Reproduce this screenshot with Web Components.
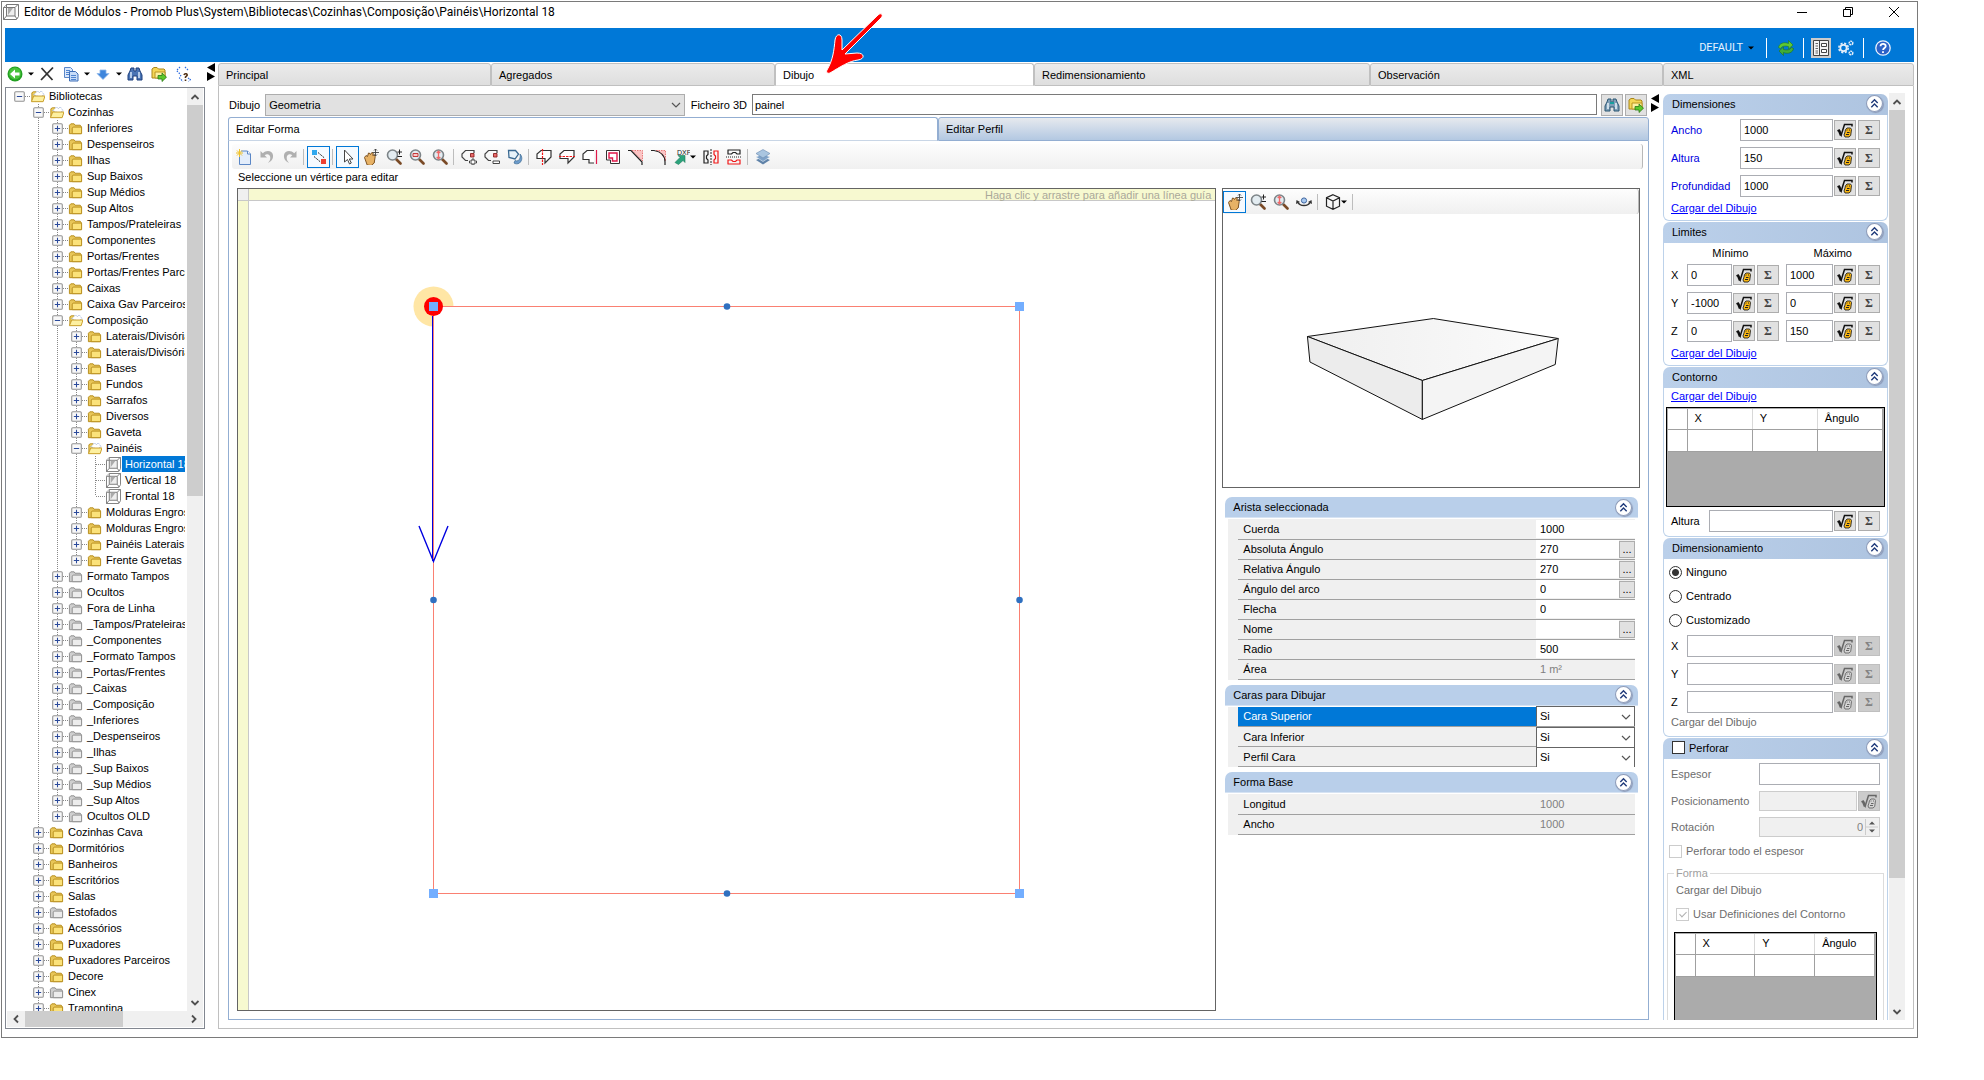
<!DOCTYPE html>
<html lang="es">
<head>
<meta charset="utf-8">
<title>Editor de Módulos</title>
<style>
html,body{margin:0;height:100%;background:#fff}
body{font:11px/16px "Liberation Sans",Arial,sans-serif;color:#000}
</style>
</head>
<body>
<module-editor></module-editor>
<script>
const BASE = `*,:host{box-sizing:border-box}
button,input,select{font:inherit;color:inherit;margin:0;border-radius:0;padding:0}
button{display:flex;align-items:center;justify-content:center;background:none;border:0;flex:none}
[hidden]{display:none}`;

function define(name, css, html, setup) {
  customElements.define(name, class extends HTMLElement {
    connectedCallback() {
      if (this.shadowRoot) return;
      const root = this.attachShadow({ mode: 'open' });
      root.innerHTML = `<style>${BASE}${css}</style>` + (typeof html === 'function' ? html(this) : html);
      if (setup) setup(root, this);
    }
  });
}

/* ---------- icons, all on a 16 x 16 grid ---------- */
const lens = (inner) => `<path d="M10.500 10.500l4 4" stroke="#7a4a26" stroke-width="2.600" stroke-linecap="round"/><circle cx="6.500" cy="6" r="5" fill="#e3ecf1" stroke="#7d8488" stroke-width="1.600"/>${inner}`;
const folder = (a, b, c) => `<path d="M1.500 13.500v-9l1.500-1.500h3.500l1 1.500h5.500l1 1v8z" fill="${a}" stroke="${c}"/><path d="M4.500 13.500v-6l1-1h9v7z" fill="${b}" stroke="${c}"/>`;
const shape = 'M1 9.500V5l4-3.500h10V8l-6 6V9.500z';
const ICONS = {
  back: `<circle cx="8" cy="8" r="7.500" fill="#23a023"/><circle cx="8" cy="7.500" r="6" fill="#47c23a"/><path d="M3 8l5-4.500V6.500h4.500v3H8v3z" fill="#fff"/>`,
  close: `<path d="M2.500 2l11 12M14 1.500L2 14" stroke="#333" stroke-width="1.800"/>`,
  copy: `<path d="M1.500 1.500h6l2 2v8h-8z" fill="#dbe8fb" stroke="#5a86c8"/><path d="M3 4.500h4M3 6.500h4M3 8.500h3" stroke="#4f84d0"/><path d="M6.500 5.500h6l2.500 2.500v7H6.500z" fill="#c6dbf8" stroke="#3f6fb8"/><path d="M8 9.500h5M8 11.500h5M8 13.500h5" stroke="#4f84d0"/>`,
  down: `<path d="M5 4h6v3.500h3L8 13.500 2 7.500h3z" fill="#3f86dc" stroke="#8db6ea" stroke-width=".8"/>`,
  binoculars: `<path d="M4 2h3v3h2V2h3l1 3 2 4v5h-5v-4H6v4H1V9l2-4z" fill="#7f9fb8" stroke="#2b5673"/><path d="M4 6v6M12 6v6" stroke="#e3eef5" stroke-width="1.600"/><path d="M6 6h4" stroke="#18a0a0" stroke-width="2"/>`,
  binoblue: `<path d="M4 2h3v3h2V2h3l1 3 2 4v5h-5v-4H6v4H1V9l2-4z" fill="#4a74b4" stroke="#1d3f7d"/><path d="M4 6v6M12 6v6" stroke="#cfe0f6" stroke-width="1.600"/>`,
  foldergo: `<path d="M1 12V3l2-1.500h3l1.500 1.500h5.500l1 1v8z" fill="#f5d654" stroke="#a8851a"/><path d="M4 12V6h10v6z" fill="#fdf0a0" stroke="#b99420"/><path d="M7 9.500h4V7l4.500 4.200-4.500 4.300V13H7z" fill="#5dc82c" stroke="#2a7a14" stroke-width=".8"/>`,
  dotq: `<path d="M5 1L1.500 4.500 5 8M10 1l3.500 3.500M6 9l-1.500 3L8 15.500M13 12l2.500 1.500-2 2" fill="none" stroke="#2c6be0" stroke-width="1.200" stroke-dasharray="1.500 1.200"/><path d="M9 9c.5-2 4-1.500 3 .6L10.500 11v1M10.500 13.500v1.500" stroke="#503014" stroke-width="1.600" fill="none"/>`,
  folder: folder('#e8c658', '#fbe27a', '#b58c1c'),
  foldergrey: folder('#cfcfcf', '#ececec', '#8c8c8c'),
  folderopen: `<path d="M2 13V4l1.500-1h3l1 1.500h5l1 1.500v7z" fill="#f0d060" stroke="#b58c1c"/><path d="M4 6l4-4 2 2 2-2 3 4-4 3z" fill="#fff" stroke="#8fa6d8" stroke-dasharray="1 1"/><path d="M1.500 13.500L4 7.500h12l-2 6z" fill="#fdf0a0" stroke="#c79c28"/>`,
  module: `<path d="M.5 3.500l3-3h12v12l-2 3H.5z" fill="#fff" stroke="#777"/><path d="M3.500 3.500h8.500v8.500H3.500zM.5 3.500h3v-3M12 3.500l3-3M12 12l2 3M3.500 12L.5 15.500" fill="#eee" stroke="#777"/><path d="M5 11V4h5z" fill="#aaa"/>`,
  new: `<path d="M5 2h6.500L14.500 5v10.500H3.500V7" fill="#e3edfb" stroke="#5b87c6"/><path d="M11.500 2v3h3" fill="#fff" stroke="#5b87c6"/><path d="M3.500 0v8M0 4h7M1 1.500l5 5M6 1.500l-5 5" stroke="#f0c22a"/>`,
  undo: `<path d="M1.500 2v6.500h6.500L5.700 6.200C8 4 11.500 5.500 11.300 9c-.1 2-1 3.500-2.300 5 3.500-1.500 5.500-4.500 5-8C13.300 1.800 7.500.6 3.800 4.300z" fill="#b0b0b0"/>`,
  redo: `<path d="M14.500 2v6.500H8l2.300-2.300C8 4 4.500 5.500 4.700 9c.1 2 1 3.500 2.300 5-3.500-1.500-5.500-4.500-5-8C2.700 1.800 8.500.6 12.200 4.300z" fill="#b0b0b0"/>`,
  edge: `<path d="M1 1h5v5H1z" fill="#2fa8ee"/><path d="M10 10h5v5h-5z" fill="#ef4030"/><path d="M7 3.500l6.500 5.500M3 7.500l6.500 5.500" stroke="#222" stroke-dasharray="2 1"/>`,
  cursor: `<path d="M4.500 1v12l3-2.500 2 4.500 1.800-1-2-4h3.700z" fill="#fff" stroke="#444"/>`,
  hand: `<path d="M1.500 8.500L3 6.500l1.500 1L5.500 4l1.500.5.500 1 1.500-2.200 1.200.9-.4 2.300 1.800-.7.600 1.700-1 6.500-3 2.500-4-.5z" fill="#e7b266" stroke="#7e5220"/><path d="M12.500 0v7M9.500 3.500h6.500M11 1.500l1.500-1.500L14 1.500M11 5.500L12.500 7 14 5.500" stroke="#444" fill="none" stroke-width=".9"/>`,
  zoompm: lens('<path d="M11.500 3h4.500M13.500.5v5M11.500 7.500h4.500" stroke="#222"/>'),
  zoomrect: lens('<path d="M4 4.500h5v3H4z" fill="#f6c8c8" stroke="#c02828" stroke-width=".9"/>'),
  zoomall: lens('<path d="M6.500 2.500v7M4.700 4l1.800-1.800L8.300 4M4.700 8l1.800 1.800L8.300 8" stroke="#f06a6a" stroke-width="1.300" fill="none"/>'),
  addv: `<path d="M7 11.500H4.500L1 8V5l3.500-3.500H13V4" fill="none" stroke="#444" stroke-width="1.200"/><path d="M9.500 4.500h3.500v3.500H9.500z" fill="#e86a6a" stroke="#8c2020" stroke-width=".9"/><path d="M11 10h2v2h2.500v2H13v2h-2v-2H8.500v-2H11z" fill="#fff" stroke="#333" stroke-width=".9"/>`,
  remv: `<path d="M7 11.500H4.500L1 8V5l3.500-3.500H13V4" fill="none" stroke="#444" stroke-width="1.200"/><path d="M9.500 4.500h3.500v3.500H9.500z" fill="#e86a6a" stroke="#8c2020" stroke-width=".9"/><path d="M9 12h6.500v2.500H9z" fill="#fff" stroke="#333" stroke-width=".9"/>`,
  rotate: `<path d="M1.500 1.500h7l3 3.500-3.500 5-6-1.500z" fill="#e8f3fa" stroke="#3b6a92" stroke-width="1.300"/><path d="M13 5c2.500 2.500 2.500 6.500-.5 9-2 1.300-4 1-5.500 0l1-2.500c2 1 4.500 0 5-2.500.3-1.200.3-2.500 0-4z" fill="#6d9ccc" stroke="#3b6a92" stroke-width=".7"/>`,
  cutv: `<path d="${shape}" fill="#fff" stroke="#333" stroke-width="1.200"/><path d="M6.500 0v16" stroke="#f01818" stroke-width="1.200" stroke-dasharray="2.500 1"/>`,
  cuth: `<path d="${shape}" fill="#fff" stroke="#333" stroke-width="1.200"/><path d="M0 7.500h16" stroke="#f01818" stroke-width="1.200" stroke-dasharray="2.500 1"/>`,
  side: `<path d="M12 14H7V10.500H1V5L5 1.500h7" fill="#fff" stroke="#333" stroke-width="1.200"/><path d="M14.500 1v14" stroke="#e0184a" stroke-width="1.200"/>`,
  offset: `<path d="M1.500 1.500h13v13h-9V11h-4z" fill="#fff" stroke="#333"/><path d="M4 4h8v8H7.500V9H4z" fill="#fff" stroke="#e0184a" stroke-width="1.400"/>`,
  chamfer: `<path d="M4 1.500h10.500V12z" fill="#fbc4c4" stroke="#e46060" stroke-width=".8" stroke-dasharray="1.500 1"/><path d="M0 1.500h3L14 13v3" fill="none" stroke="#222" stroke-width="1.200"/>`,
  fillet: `<path d="M5 1.500h9.500V12C13 7 10 3 5 1.500z" fill="#fbc4c4" stroke="#e46060" stroke-width=".8" stroke-dasharray="1.500 1"/><path d="M0 1.500h3C10 2.500 14 7 14 13v3" fill="none" stroke="#222" stroke-width="1.200"/>`,
  dxf: `<text x="3" y="6" font-family="Liberation Sans" font-size="7" fill="#222">DXF</text><path d="M1 13.500l5-5L4 6.500h7v7l-2-2-4.500 4z" fill="#2ba37c" stroke="#197a58" stroke-width=".6"/>`,
  mirrorh: `<path d="M1 1.500v13M1 2h4v3.500L3.500 7v2.500L5 11v3H1" fill="none" stroke="#222" stroke-width="1.200"/><path d="M15 1.500v13M15 2h-4v3.500L12.500 7v2.500L11 11v3h4" fill="none" stroke="#f01818" stroke-width="1.200"/><path d="M8 0v16" stroke="#222" stroke-dasharray="2 1"/>`,
  mirrorv: `<path d="M1.500 1h13M2 1v4h3.500L7 3.500h2.500L11 5h3V1" fill="none" stroke="#222" stroke-width="1.200"/><path d="M1.500 15h13M2 15v-4h3.500L7 12.500h2.500L11 11h3v4" fill="none" stroke="#f01818" stroke-width="1.200"/><path d="M0 8h16" stroke="#222" stroke-dasharray="1 1"/>`,
  layers: `<path d="M1 11l7-3 7 3-7 4.500z" fill="#5f82a8"/><path d="M1 8l7-3 7 3-7 4.500z" fill="#7fa2c8" stroke="#e6eef6" stroke-width=".6"/><path d="M1 4.500L8 .5l7 4-7 4.500z" fill="#a9c5e0" stroke="#6a8cb0" stroke-width=".6"/>`,
  orbit: `<path d="M2 8.500c2 4 10 4 12 0" fill="none" stroke="#333" stroke-width="1.600"/><path d="M0 10l.5-4L4 8zM16 10l-.5-4L12 8z" fill="#333"/><circle cx="8" cy="6.500" r="2.600" fill="#a7c8ef" stroke="#3f66a0"/>`,
  cube: `<path d="M8 .7l6.500 3v8.500L8 15.300l-6.500-3.100V3.700zM1.500 3.700L8 7l6.500-3.300M8 7v8.300" fill="none" stroke="#222" stroke-width="1.200"/>`,
  sqrt: `<path d="M.5 9l1.700-1 2 5L7.500 2.500H15V4.500" fill="none" stroke="#111" stroke-width="1.500"/><path d="M2 8.500l2 5" stroke="#111" stroke-width="2.400"/><path d="M8.500 7.500L10 6h3.500l1 1.500-.8 6L12 15H8l-1-2 1-3z" fill="#f7b512" stroke="#222" stroke-width=".9"/><path d="M9.500 8h1M12 8h1M9 12.500h3M10 10.500h2.500" stroke="#222"/>`,
  sqrtoff: `<path d="M.5 9l1.700-1 2 5L7.500 2.500H15V4.500" fill="none" stroke="#666" stroke-width="1.500"/><path d="M2 8.500l2 5" stroke="#666" stroke-width="2.400"/><path d="M8.500 7.500L10 6h3.500l1 1.500-.8 6L12 15H8l-1-2 1-3z" fill="#d4d4d4" stroke="#666" stroke-width=".9"/><path d="M9.500 8h1M12 8h1M9 12.500h3M10 10.500h2.500" stroke="#666"/>`,
  refresh: `<path d="M.5 7.500C1 3.500 6 1.500 10.500 3.500V.5L15 5l-4.500 4V6.500C7 5.500 4 6 2.500 8.500z" fill="#5ec832" stroke="#207a20" stroke-width=".6"/><path d="M15.500 8.500c-.5 4-5.500 6-10 4v3L1 11l4.500-4v2.500c3.500 1 6.500.5 8-2z" fill="#41ad38" stroke="#1c6e20" stroke-width=".6"/>`,
  form: `<path d="M.5.5h15v15H.5z" fill="#f5f5f5" stroke="#444"/><path d="M6.500 1v14" stroke="#444"/><path d="M2.500 3.500h2.500M2.500 6h2.500M2.500 8.500h2.500M2.500 11h2.500M2.500 13h2.500" stroke="#555" stroke-width=".9"/><path d="M8.500 3.500h5v3h-5zM8.500 9.500h5v3h-5z" fill="#fff" stroke="#444"/>`,
  gears: `<circle cx="5.500" cy="8" r="3.200" fill="none" stroke="#e3eefa" stroke-width="1.800"/><circle cx="5.500" cy="8" r="4.700" fill="none" stroke="#e3eefa" stroke-width="1.600" stroke-dasharray="2.100 1.600"/><circle cx="13" cy="3" r="1.800" fill="none" stroke="#e3eefa" stroke-width="1.500" stroke-dasharray="1.800 .5"/><circle cx="13" cy="13" r="1.800" fill="none" stroke="#e3eefa" stroke-width="1.500" stroke-dasharray="1.800 .5"/>`,
  help: `<circle cx="8" cy="8" r="7.200" fill="#2c62c8" stroke="#eaf2fd" stroke-width="1.300"/><path d="M5.500 6.200c.2-3.200 5.400-3 5.200 0-.1 1.700-2.600 1.800-2.600 3.800M8 11.200v1.900" fill="none" stroke="#fff" stroke-width="1.800"/>`,
  caret: `<path d="M5 6.500h6l-3 3z" fill="#000"/>`,
  chevron: `<path d="M4 6l4 4 4-4" fill="none" stroke="#555" stroke-width="1.200"/>`,
  scrollup: `<path d="M4.500 10L8 6.500l3.500 3.500" fill="none" stroke="#505050" stroke-width="1.800"/>`,
  scrolldown: `<path d="M4.500 6L8 9.500 11.500 6" fill="none" stroke="#505050" stroke-width="1.800"/>`,
  scrollleft: `<path d="M10 4.500L6.500 8l3.500 3.500" fill="none" stroke="#505050" stroke-width="1.800"/>`,
  scrollright: `<path d="M6 4.500L9.500 8 6 11.500" fill="none" stroke="#505050" stroke-width="1.800"/>`,
  collapse: `<circle cx="8" cy="8" r="7.500" fill="#fff" stroke="#8d9bb8"/><path d="M5 7.500l3-3 3 3M5 11.500l3-3 3 3" fill="none" stroke="#1f3a7a" stroke-width="1.300"/>`,
  minimize: `<path d="M3 8.500h10" stroke="#000"/>`,
  restore: `<path d="M3.500 5.500h7v7h-7zM5.500 5.500v-2h7v7h-2" fill="none" stroke="#000"/>`,
  winclose: `<path d="M3 3l10 10M13 3L3 13" stroke="#000"/>`,
  plus: `<rect x="3.500" y="3.500" width="9" height="9" rx="1" fill="#f8f8f8" stroke="#919191"/><path d="M5.500 8h5M8 5.500v5" stroke="#2b4a9b"/>`,
  minus: `<rect x="3.500" y="3.500" width="9" height="9" rx="1" fill="#f8f8f8" stroke="#919191"/><path d="M5.500 8h5" stroke="#2b4a9b"/>`
};
define('ui-icon', `:host{display:block;width:16px;height:16px;flex:none}svg{display:block;width:100%;height:100%}`,
  el => `<svg viewBox="0 0 16 16" fill="none" aria-hidden="true">${ICONS[el.getAttribute('name')]}</svg>`);

/* ---------- small shared parts ---------- */
define('pane-splitter', `:host{display:block;flex:none}svg{display:block}`,
  `<svg width="9" height="18" aria-hidden="true"><path d="M8 0v9L0 4.500zM0 9v9l8-4.500z" fill="#000"/></svg>`);

define('scroll-bar', `:host{display:flex;flex:none;background:#f0f0f0;align-items:stretch}
:host([dir=v]){flex-direction:column;width:16px}
:host([dir=h]){height:16px}
button{width:16px;height:17px}
:host([dir=h]) button{height:16px;width:18px}
.track{flex:1;display:flex;flex-direction:inherit}
i{background:#cdcdcd;flex:0 0 var(--size)}`,
  el => { const v = el.getAttribute('dir') === 'v';
    return `<button aria-label="Anterior"><ui-icon name="${v ? 'scrollup' : 'scrollleft'}"></ui-icon></button><div class="track"><i></i></div><button aria-label="Siguiente"><ui-icon name="${v ? 'scrolldown' : 'scrollright'}"></ui-icon></button>`; });

define('tool-button', `:host{display:block;flex:none}
button{width:23px;height:22px;border:1px solid transparent}
:host([split]) button{width:29px}
:host([pressed]) button{border-color:#0078d7;background:#f5faff}
.caret{margin:0 -6px 0 -5px}`,
  el => `<button aria-label="${el.getAttribute('icon')}"><ui-icon name="${el.getAttribute('icon')}"></ui-icon>${el.hasAttribute('split') ? '<ui-icon class="caret" name="caret"></ui-icon>' : ''}</button>`);
define('tool-separator', `:host{display:block;flex:none;width:6px;height:16px;border-right:1px solid #bdbdbd;margin-right:3px;margin-left:-3px}`, '');

define('tool-strip', `:host{display:flex;align-items:center;height:25px;background:linear-gradient(#fdfdfd,#f0f0f0);border-right:1px solid #b8b8b8;border-radius:3px}`, `<slot></slot>`);

/* each tab's weight leaves out its own 16px of padding and border */
define('tab-strip', `:host{display:flex;flex:none}
button{justify-content:flex-start;padding:0 7px;min-width:0;border:1px solid #c0c0c0;border-radius:3px 3px 0 0;background:linear-gradient(#ebebeb,#dedede);height:23px}
button[aria-selected=true]{background:#fff;border-bottom-color:#e4e4e4}
:host([kind=blue]) button{border-color:#93aed2;background:linear-gradient(#e6e9ee,#b3c8e2);height:24px}
:host([kind=blue]) button[aria-selected=true]{background:#fff;border-bottom-color:#c9d6e6}`,
  el => el.getAttribute('tabs').split(',').map((t, i) => { const [n, w] = t.split(':');
    return `<button role="tab" aria-selected="${i == el.getAttribute('selected')}" style="flex:${w - 16} 1 0">${n}</button>`; }).join(''));

define('formula-buttons', `:host{display:flex;gap:2px;flex:none;margin-left:1px}
button{width:22px;height:20px;background:#e1e1e1;border:1px solid #adadad;font:bold 12px/16px "Liberation Serif",serif;color:#444}
button:disabled{background:#ccc;border-color:#bfbfbf;color:#838383}`,
  el => { const off = el.hasAttribute('disabled');
    return `<button ${off ? 'disabled' : ''} aria-label="Fórmula"><ui-icon name="${off ? 'sqrtoff' : 'sqrt'}"></ui-icon></button>${el.hasAttribute('single') ? '' : `<button ${off ? 'disabled' : ''}>Σ</button>`}`; });

define('value-field', `:host{display:flex;align-items:center;height:22px;flex:1 1 0;min-width:0}
label{flex:none;width:var(--label,16px);color:var(--label-color,inherit)}
input{flex:1;min-width:0;width:0;height:22px;border:1px solid #abadb3;padding:0 3px;background:#fff;outline:0}
:host([nolabel]) label{display:none}`,
  el => `<label for="v">${el.getAttribute('label')}</label><input id="v" aria-label="${el.getAttribute('label')}" value="${el.getAttribute('value') || ''}" ${el.hasAttribute('disabled') ? 'disabled' : ''}><formula-buttons ${el.hasAttribute('disabled') ? 'disabled' : ''}></formula-buttons>`);

define('group-panel', `:host{display:block;flex:none}
header{display:flex;align-items:center;height:21px;padding:0 5px 2px 9px;border-radius:7px 7px 0 0;background:linear-gradient(90deg,#bbd0ea,#aec4e0)}
h2{font:inherit;margin:0;flex:1;display:flex;align-items:center;gap:4px}
button{width:17px;height:17px;border-radius:9px;box-shadow:1px 1px 1px #8d9bb8}
ui-icon{width:17px;height:17px}
.body{border:1px solid #bdd2ea;border-top:0;border-radius:0 0 6px 6px;background:#fff}
:host([plain]) header{background:#b9cfea;border-bottom:1px solid #d6e3f3;padding:0 6px 0 8px}
:host([plain]) .body{border:0}`,
  `<header><h2><slot name="heading"></slot></h2><button aria-label="Contraer"><ui-icon name="collapse"></ui-icon></button></header><div class="body"><slot></slot></div>`);

define('vertex-table', `:host{display:block;border:1px solid #000;background:#ababab;height:100px;padding:1px;color:#000}
table{border-collapse:collapse;width:100%;table-layout:fixed;background:#fff}
th{font-weight:normal;text-align:left;height:20px;padding:0 7px 2px;border-right:1px solid #d8d8d8;border-bottom:1px solid #a0a0a0}
td{height:22px;border:1px solid #a0a0a0;border-top:0}
tr>:first-child{width:19px;padding:0;border-left:0;border-right:1px solid #a0a0a0}
th:last-child,td:last-child{border-right:1px solid #a0a0a0}`,
  `<table><tr><th></th><th>X</th><th>Y</th><th>Ângulo</th></tr><tr><td></td><td></td><td></td><td></td></tr></table>`);

/* ---------- title and ribbon ---------- */
define('title-bar', `:host{display:flex;align-items:center;height:26px;padding:0 11px 6px 1px;flex:none;font:12px/16px Roboto,"Open Sans",sans-serif}
h1{font:inherit;margin:0 0 0 5px;flex:1}
nav{display:flex;gap:22px}button{width:24px;height:20px}`,
  `<ui-icon name="module"></ui-icon><h1>Editor de Módulos - Promob Plus\\System\\Bibliotecas\\Cozinhas\\Composição\\Painéis\\Horizontal 18</h1>
<nav><button aria-label="Minimizar"><ui-icon name="minimize"></ui-icon></button><button aria-label="Restaurar"><ui-icon name="restore"></ui-icon></button><button aria-label="Cerrar"><ui-icon name="winclose"></ui-icon></button></nav>`);

define('main-ribbon', `:host{display:flex;align-items:center;justify-content:flex-end;height:34px;background:#0078d7;margin:0 3px;padding:6px 19px 0 0;flex:none;color:#e8f3fd;font-family:Roboto,sans-serif}
button{height:20px}.on{width:20px;background:#ccc}
i{width:1px;height:20px;background:#fff;margin:0 7px}
.re{margin:0 2px 0 4px}.ge{margin:0 2px 0 7px}.he{margin:0 4px}`,
  `<button>DEFAULT<ui-icon name="caret"></ui-icon></button><i></i><button class="re" aria-label="Actualizar"><ui-icon name="refresh"></ui-icon></button><i></i><button class="on" aria-label="Formulario"><ui-icon name="form"></ui-icon></button><button class="ge" aria-label="Opciones"><ui-icon name="gears"></ui-icon></button><i></i><button class="he" aria-label="Ayuda"><ui-icon name="help"></ui-icon></button>`);

/* ---------- library tree ---------- */
const TREE = `0-o Bibliotecas
1-o Cozinhas
2+y Inferiores
2+y Despenseiros
2+y Ilhas
2+y Sup Baixos
2+y Sup Médios
2+y Sup Altos
2+y Tampos/Prateleiras
2+y Componentes
2+y Portas/Frentes
2+y Portas/Frentes Parceiros
2+y Caixas
2+y Caixa Gav Parceiros
2-o Composição
3+y Laterais/Divisórias
3+y Laterais/Divisórias
3+y Bases
3+y Fundos
3+y Sarrafos
3+y Diversos
3+y Gaveta
3-o Painéis
4.m Horizontal 18
4.m Vertical 18
4.m Frontal 18
3+y Molduras Engrossadas
3+y Molduras Engrossadas
3+y Painéis Laterais
3+y Frente Gavetas
2+g Formato Tampos
2+g Ocultos
2+g Fora de Linha
2+g _Tampos/Prateleiras
2+g _Componentes
2+g _Formato Tampos
2+g _Portas/Frentes
2+g _Caixas
2+g _Composição
2+g _Inferiores
2+g _Despenseiros
2+g _Ilhas
2+g _Sup Baixos
2+g _Sup Médios
2+g _Sup Altos
2+g Ocultos OLD
1+y Cozinhas Cava
1+y Dormitórios
1+y Banheiros
1+y Escritórios
1+y Salas
1+g Estofados
1+y Acessórios
1+y Puxadores
1+y Puxadores Parceiros
1+y Decore
1+g Cinex
1+y Tramontina`.split('\n').map(s => ({ level: +s[0], mark: s[1], kind: s[2], name: s.slice(4) }));
const continues = (i, level) => { for (let j = i + 1; j < TREE.length; j++) { if (TREE[j].level === level) return true; if (TREE[j].level < level) return false; } return level === 1; };

define('library-tree', `:host{display:flex;flex-direction:column;flex:1;min-height:0;border:1px solid #828790;background:#fff;padding:0 1px 1px}
.top{display:flex;flex:1;min-height:0}
ul{list-style:none;margin:0 2px 0 0;padding:0 0 0 4px;flex:1;min-width:0;overflow:hidden}
li{display:flex;height:16px;align-items:center;white-space:nowrap}
.g{flex:none;width:19px;height:16px;background:repeating-linear-gradient(#888 0 1px,#fff 1px 2px) 8px 0/1px 100% no-repeat}
.g.up{background-size:1px 8px}
.g.none{background:none}
.e{display:flex;align-items:center}
.e ui-icon{width:17px;height:17px;flex:none}
.e.leaf::before{content:"";width:17px}
.e::after{content:"";flex:none;width:6px;height:1px;margin-left:-3px;margin-right:-1px;background:repeating-linear-gradient(90deg,#888 0 1px,#fff 1px 2px)}
.e.leaf::after{width:11px;margin-left:-8px}
.k{width:15px;height:15px}
span{padding:0 3px;margin-left:1px}
li[aria-selected=true] span{background:#0078d7;color:#fff}`,
  () => `<div class="top"><ul role="tree">${TREE.map((n, i) => {
    let g = '';
    for (let a = 1; a < n.level; a++) g += `<i class="g ${continues(i, a) ? '' : 'none'}"></i>`;
    const own = n.level > 0 ? (continues(i, n.level) ? 'g' : 'g up') : 'g none';
    const icon = { o: 'folderopen', y: 'folder', g: 'foldergrey', m: 'module' }[n.kind];
    const e = n.mark === '.' ? '' : `<ui-icon name="${n.mark === '+' ? 'plus' : 'minus'}"></ui-icon>`;
    return `<li role="treeitem" aria-selected="${n.name === 'Horizontal 18'}">${n.level ? '<i class="g none"></i>' : ''}${g}<i class="${own} e ${e ? '' : 'leaf'}">${e}</i><ui-icon class="k" name="${icon}"></ui-icon><span>${n.name}</span></li>`;
  }).join('')}</ul><scroll-bar dir="v" style="--size:44%"></scroll-bar></div><scroll-bar dir="h" style="--size:98px"></scroll-bar>`);

define('library-pane', `:host{display:flex;flex-direction:column;width:200px;flex:none}
nav{display:flex;align-items:center;height:25px;padding:0 0 2px 2px;gap:8px}
.d{margin-left:-7px;margin-right:-7px;width:14px}`,
  `<nav><button aria-label="Volver"><ui-icon name="back"></ui-icon></button><button class="d" aria-label="Más"><ui-icon name="caret"></ui-icon></button><button aria-label="Eliminar"><ui-icon name="close"></ui-icon></button><button aria-label="Copiar"><ui-icon name="copy"></ui-icon></button><button class="d" aria-label="Más"><ui-icon name="caret"></ui-icon></button><button aria-label="Bajar"><ui-icon name="down"></ui-icon></button><button class="d" aria-label="Más"><ui-icon name="caret"></ui-icon></button><button aria-label="Buscar"><ui-icon name="binoblue"></ui-icon></button><button aria-label="Abrir"><ui-icon name="foldergo"></ui-icon></button><button aria-label="Consulta"><ui-icon name="dotq"></ui-icon></button></nav><library-tree></library-tree>`);

/* ---------- shape canvas ---------- */
define('shape-canvas', `:host{display:grid;grid-template:12px 1fr/11px 1fr;border:1px solid #646464;background:#fff;flex:978 1 0;min-width:0}
.corner{background:#f0f0f0;border:solid #c8c8c8;border-width:0 1px 1px 0}
.top{background:#f7f9d0;border-bottom:1px solid #c8c8c8;text-align:right;line-height:12px;color:#aaa89a;padding-right:4px;white-space:nowrap}
.left{background:#f7f9d0;border-right:1px solid #c8c8c8}
.free{min-width:0;min-height:0;overflow:hidden}
svg{display:block;width:100%;height:100%}`,
  () => { const L = 184.5, R = 770.5, T = 105.5, B = 692.5, mx = 478, my = 399;
    return `<div class="corner"></div><div class="top">Haga clic y arrastre para añadir una línea guía</div><div class="left"></div><div class="free"><svg role="img" aria-label="Forma">
<circle cx="${L}" cy="${T}" r="20" fill="#ffe6a5"/><rect x="${L}" y="${T}" width="${R - L}" height="${B - T}" fill="#fff" stroke="#fa8072"/>
<circle cx="${L}" cy="${T}" r="9.500" fill="#f00"/>
<path d="M183.500 115V360" stroke="#0000e0"/><path d="M170 325l14.500 35.500L199 325" fill="none" stroke="#0000e0" stroke-width="1.400"/>
${[[L, T], [R, T], [L, B], [R, B]].map(p => `<rect x="${p[0] - 4.5}" y="${p[1] - 4.5}" width="9" height="9" fill="#73aeff"/>`).join('')}
${[[mx, T], [mx, B], [L, my], [R, my]].map(p => `<circle cx="${p[0]}" cy="${p[1]}" r="3.300" fill="#2f70c0"/>`).join('')}</svg></div>`; });

define('solid-view', `:host{display:flex;flex-direction:column;height:300px;border:1px solid #646464;background:#fff;flex:none}
svg{display:block;flex:1;width:100%;min-height:0}`,
  `<tool-strip><tool-button icon="hand" pressed></tool-button><tool-button icon="zoompm"></tool-button><tool-button icon="zoomall"></tool-button><tool-button icon="orbit"></tool-button><tool-separator></tool-separator><tool-button icon="cube" split></tool-button><tool-separator></tool-separator></tool-strip>
<svg viewBox="0 0 416 273" preserveAspectRatio="xMidYMid meet" role="img" aria-label="Vista 3D"><defs><linearGradient id="t" x1="0" x2="1"><stop offset="0" stop-color="#efefef"/><stop offset="1" stop-color="#fbfbfb"/></linearGradient></defs>
<g stroke="#111" stroke-linejoin="round"><path d="M84.500 122.500L210.500 104.500l125 20-136 42z" fill="url(#t)"/><path d="M84.500 122.500l115 44v39L87 148z" fill="#ececec"/><path d="M199.500 166.500l136-42-3 26-133 55z" fill="#f4f4f4"/></g></svg>`);

/* ---------- property grid ---------- */
define('property-grid', `:host{display:block;padding:1px 0 0 3px;margin-right:3px}
table{border-collapse:collapse;width:100%;table-layout:fixed;background:#f0f0f0}
tr{height:20px}
th{font-weight:normal;text-align:left;padding:0 0 0 5px;border-bottom:1px solid #a0a0a0}
th.gut{width:10px;border:0;padding:0}
td{width:99px;padding:0;border-bottom:1px solid #a0a0a0}
td>div{display:flex;height:18px;align-items:center;position:relative}
input{flex:1;width:0;border:0;height:18px;background:#fff;padding:0 0 0 4px;outline:0}
input:disabled{background:#f0f0f0;color:#808080}
button{width:16px;height:17px;background:#e1e1e1;border:1px solid #adadad}
select{width:100%;height:20px;appearance:none;border:1px solid #646464;border-bottom:0;background:#fff;padding:0 3px 1px}
ui-icon{position:absolute;right:1px;top:2px;pointer-events:none}
tr.sel label{color:#fff}tr.sel .n{background:#0078d7}`,
  el => `<table>${el.getAttribute('rows').split(';').map((r, i) => { const [n, v, t] = r.split('|'); const id = 'p' + i;
    const c = t === 's' ? `<select id="${id}"><option>${v}</option></select><ui-icon name="chevron"></ui-icon>`
      : `<input id="${id}" value="${v}" ${t === 'd' ? 'disabled' : ''}>${t === 'b' ? '<button>...</button>' : ''}`;
    return `<tr class="${n === 'Cara Superior' ? 'sel' : ''}"><th class="gut"></th><th class="n"><label for="${id}">${n}</label></th><td><div>${c}</div></td></tr>`; }).join('')}</table>`);

/* ---------- drawing page ---------- */
define('drawing-page', `:host{display:flex;flex-direction:column;flex:1;min-width:0}
.file{display:flex;align-items:center;height:23px;margin-bottom:1px;padding-right:2px}
.file label{margin:0 5px 0 1px}
.file .f3{margin-left:6px}
.combo{display:flex;position:relative;flex:421 1 0}
.combo ui-icon{position:absolute;right:1px;top:3px;pointer-events:none}
select{width:100%;height:22px;appearance:none;border:1px solid #adadad;background:#e1e1e1;padding:0 3px}
.file input{flex:842 1 0;min-width:0;height:21px;border:1px solid #7a7a7a;padding:0 2px;background:#fff;margin-right:4px;outline:0}
.file button{width:22px;height:22px;background:#e1e1e1;border:1px solid #adadad}
.file button+button{margin-left:2px}
.page{flex:1;min-height:0;display:flex;flex-direction:column;border:1px solid #93aed2;border-top:0;padding:3px 5px 8px 3px}
p{margin:0;padding-left:6px;height:19px;line-height:16px}
.work{display:flex;gap:6px;flex:1;min-height:0;padding:0 3px 0 5px}
aside{flex:418 1 0;display:flex;flex-direction:column;min-width:0}
.props{display:flex;flex-direction:column;gap:5px;padding:9px 2px 0 3px}`,
  `<div class="file"><label for="d">Dibujo</label><div class="combo"><select id="d"><option>Geometria</option></select><ui-icon name="chevron"></ui-icon></div><label for="f" class="f3">Ficheiro 3D</label><input id="f" value="painel"><button aria-label="Buscar"><ui-icon name="binoculars"></ui-icon></button><button aria-label="Abrir"><ui-icon name="foldergo"></ui-icon></button></div>
<tab-strip kind="blue" selected="0" tabs="Editar Forma:710,Editar Perfil:711"></tab-strip>
<div class="page"><tool-strip>${'new undo redo | edge* | cursor* hand zoompm zoomrect zoomall | addv remv rotate | cutv cuth side offset chamfer fillet dxf> mirrorh mirrorv | layers'.split(' ').map(n => n === '|' ? '<tool-separator></tool-separator>' : `<tool-button icon="${n.replace(/[*>]/, '')}" ${n.endsWith('*') ? 'pressed' : n.endsWith('>') ? 'split' : ''}></tool-button>`).join('')}</tool-strip>
<p>Seleccione un vértice para editar</p>
<div class="work"><shape-canvas></shape-canvas><aside><solid-view></solid-view><div class="props">
<group-panel plain><span slot="heading">Arista seleccionada</span><property-grid rows="Cuerda|1000|;Absoluta Ángulo|270|b;Relativa Ángulo|270|b;Ángulo del arco|0|b;Flecha|0|;Nome||b;Radio|500|;Área|1 m²|d"></property-grid></group-panel>
<group-panel plain><span slot="heading">Caras para Dibujar</span><property-grid rows="Cara Superior|Si|s;Cara Inferior|Si|s;Perfil Cara|Si|s"></property-grid></group-panel>
<group-panel plain><span slot="heading">Forma Base</span><property-grid rows="Longitud|1000|d;Ancho|1000|d"></property-grid></group-panel>
</div></aside></div></div>`);

/* ---------- right-hand settings ---------- */
define('settings-pane', `:host{display:flex;width:242px;flex:none;min-height:0}
.list{flex:1;min-width:0;overflow:hidden;display:flex;flex-direction:column;gap:1px;padding:1px 1px 0 0}
.in{display:flex;flex-direction:column;padding:4px 7px}
.lim{padding-top:2px}.con{padding-top:0}.con a{margin-top:0}.dims{padding:1px 7px 6px}.dims .rows{margin-top:3px}
.con vertex-table{margin:3px -5px}
.rows{display:flex;flex-direction:column;gap:6px}
.wide{--label:69px;--label-color:#0000e0}
a{color:#0000ff;display:block;height:16px;align-self:flex-start;margin-top:3px}
a.off{color:#6d6d6d;text-decoration:none;margin-top:1px}
.two{display:flex;gap:7px}
.cap{display:flex;height:16px;margin-bottom:3px;text-align:center}
.cap span{flex:1}.cap span:first-child{padding-left:12px}.cap span+span{padding-left:8px}
.radio{display:flex;align-items:center;gap:4px;height:24px;margin-left:-2px}
input[type=radio],input[type=checkbox]{appearance:none;width:13px;height:13px;border:1px solid #333;background:#fff;flex:none}
input[type=radio]{border-radius:50%}
input[type=radio]:checked{background:radial-gradient(circle,#333 0 3px,#fff 4px)}
input[type=checkbox]:disabled{border-color:#ccc}
.dim{color:#6d6d6d}
.line{display:flex;align-items:center;height:22px;margin-bottom:6px}
.line label{width:88px;flex:none}
.line input{flex:1;min-width:0;width:0;height:22px;border:1px solid #abadb3;background:#fff;padding:0 16px 0 3px}
.line.grey{height:20px}.line.grey input{height:20px;background:#f0f0f0;border-color:#ccc;color:#808080}
.spin{position:relative}.spin input{text-align:right}
.spin svg{position:absolute;right:2px;top:2px}
.check{display:flex;align-items:center;gap:4px;height:16px}
.all{margin-left:-2px}
fieldset{border:1px solid #dcdcdc;margin:6px -4px 0;padding:0 6px 4px;min-width:0;height:200px}
legend{color:#a0a0a0;padding:0 2px}
fieldset a.off{margin:1px 2px 0}
fieldset .check{margin:8px 0 10px 2px}
fieldset vertex-table{height:120px}
.tick{position:relative}
.tick::after{content:"";position:absolute;left:4px;top:1px;width:3px;height:6px;border:solid #b0b0b0;border-width:0 1px 1px 0;transform:rotate(45deg)}`,
  `<div class="list">
<group-panel><span slot="heading">Dimensiones</span><div class="in wide"><div class="rows"><value-field label="Ancho" value="1000"></value-field><value-field label="Altura" value="150"></value-field><value-field label="Profundidad" value="1000"></value-field></div><a href="#">Cargar del Dibujo</a></div></group-panel>
<group-panel><span slot="heading">Limites</span><div class="in lim"><div class="cap"><span>Mínimo</span><span>Máximo</span></div><div class="rows">${[['X', '0', '1000'], ['Y', '-1000', '0'], ['Z', '0', '150']].map(r => `<div class="two"><value-field label="${r[0]}" value="${r[1]}" style="flex:0 0 108px"></value-field><value-field nolabel label="${r[0]}" value="${r[2]}"></value-field></div>`).join('')}</div><a href="#">Cargar del Dibujo</a></div></group-panel>
<group-panel><span slot="heading">Contorno</span><div class="in con"><a href="#">Cargar del Dibujo</a><vertex-table></vertex-table><value-field label="Altura" style="--label:38px;flex:none"></value-field></div></group-panel>
<group-panel><span slot="heading">Dimensionamiento</span><div class="in dims"><label class="radio"><input type="radio" name="m" checked>Ninguno</label><label class="radio"><input type="radio" name="m">Centrado</label><label class="radio"><input type="radio" name="m">Customizado</label><div class="rows">${['X', 'Y', 'Z'].map(n => `<value-field label="${n}" disabled></value-field>`).join('')}</div><a class="off" href="#">Cargar del Dibujo</a></div></group-panel>
<group-panel><input slot="heading" type="checkbox" id="perf"><label slot="heading" for="perf">Perforar</label><div class="in dim"><div class="line"><label for="esp">Espesor</label><input id="esp"></div><div class="line grey"><label for="pos">Posicionamento</label><input id="pos" disabled><formula-buttons single disabled></formula-buttons></div><div class="line grey spin"><label for="rot">Rotación</label><input id="rot" value="0" disabled><svg width="13" height="16" aria-hidden="true"><path d="M.5 0v16M0 8h13" stroke="#ccc"/><path d="M4 5.500h6l-3-3zM4 10.500h6l-3 3z" fill="#555"/></svg></div><label class="check all"><input type="checkbox" disabled>Perforar todo el espesor</label>
<fieldset><legend>Forma</legend><a class="off" href="#">Cargar del Dibujo</a><label class="check"><input class="tick" type="checkbox" checked disabled>Usar Definiciones del Contorno</label><vertex-table></vertex-table></fieldset></div></group-panel>
</div><scroll-bar dir="v" style="--size:86%"></scroll-bar>`);

/* ---------- application window ---------- */
define('module-editor', `:host{display:flex;height:100vh;padding:1px 66px 42px 1px;position:relative}
.win{display:flex;flex-direction:column;flex:1;min-width:0;border:1px solid #7a7a7a;background:#fff}
.body{display:flex;flex:1;min-height:0;padding:0 3px 8px 3px}
.s1{padding:1px 2px;width:13px}
main{flex:1;min-width:0;display:flex;flex-direction:column;padding-top:1px}
.page{flex:1;min-height:0;display:flex;border:1px solid #c0c0c0;border-top:0;padding:7px 8px 8px 9px}
.s2{padding:1px 2px;width:14px}
.mark{position:absolute;left:41.600%;top:12px;pointer-events:none}`,
  `<div class="win"><title-bar></title-bar><main-ribbon></main-ribbon><div class="body"><library-pane></library-pane><pane-splitter class="s1"></pane-splitter>
<main><tab-strip selected="2" tabs="Principal:273,Agregados:284,Dibujo:259,Redimensionamiento:336,Observación:293,XML:251"></tab-strip><div class="page"><drawing-page></drawing-page><pane-splitter class="s2"></pane-splitter><settings-pane></settings-pane></div></main></div></div>
<svg class="mark" width="62" height="66" aria-hidden="true"><path d="M53 3c3-3 6 0 3 3L20 42l12-1c8 0 8 6 1 7-9 1-18 7-28 13-3 1-4-1-3-3 6-10 7-20 8-30 1-7 7-7 7 0v10z" fill="#f00" stroke="#fff"/></svg>`);
</script>
</body>
</html>
